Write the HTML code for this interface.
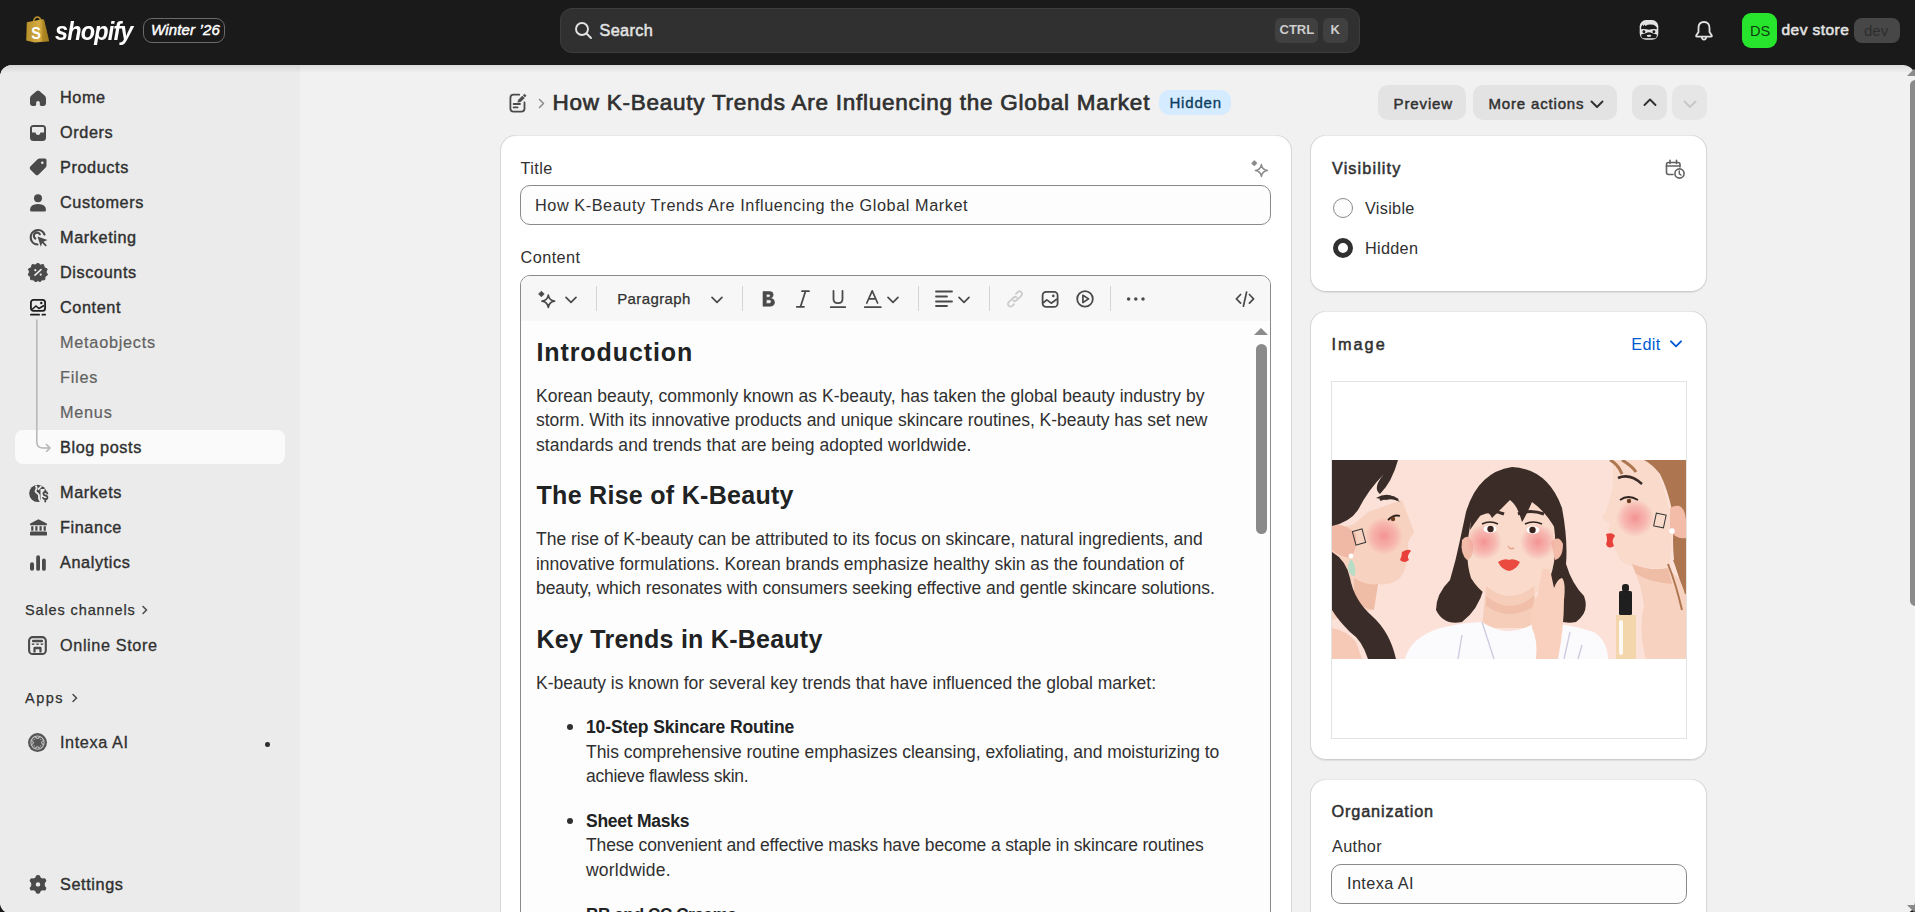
<!DOCTYPE html>
<html><head><meta charset="utf-8">
<style>
*{box-sizing:border-box;margin:0;padding:0}
html,body{width:1915px;height:912px;overflow:hidden;background:#1a1a1a;font-family:"Liberation Sans",sans-serif;color:#303030}
.abs{position:absolute}
#top{position:absolute;left:0;top:0;width:1915px;height:64px;background:#1a1a1a}
#frame{position:absolute;left:0;top:65px;width:1915px;height:849px;background:#f1f1f1;border-radius:12px;overflow:hidden}
#side{position:absolute;left:0;top:-1px;width:300px;height:860px;background:#ebebeb}
#main{position:absolute;left:0;top:0;width:1915px;height:912px;overflow:hidden;clip-path:inset(64px 0 0 0)}
.nav{position:absolute;left:60px;font-size:16.25px;font-weight:normal;-webkit-text-stroke:0.4px #303030;letter-spacing:0.6px;color:#303030;white-space:nowrap;line-height:20px}
.sub{font-weight:normal;color:#616161;-webkit-text-stroke:0.2px #616161;letter-spacing:0.75px}
.t{position:absolute;white-space:nowrap}
.card{position:absolute;background:#fff;border-radius:16px;box-shadow:0 1px 1px 0 rgba(26,26,26,.08),0 1px 0 0 rgba(208,208,208,.5) inset,1px 0 0 0 #d8d8d8 inset,-1px 0 0 0 #d8d8d8 inset,0 -1px 0 0 #cdcdcd inset;}
</style></head><body>
<div id="top">
  <!-- shopify bag -->
  <svg class="abs" style="left:26px;top:16px" width="24" height="27" viewBox="0 0 24 27">
    <defs><linearGradient id="bg1" x1="0" y1="0" x2="1" y2="0"><stop offset="0" stop-color="#b8902a"/><stop offset=".55" stop-color="#d4ac42"/><stop offset="1" stop-color="#a47c1c"/></linearGradient></defs>
    <path d="M7.5 6 Q8 1.5 11 1 Q14 0.8 14.8 4.5" fill="none" stroke="#b8902a" stroke-width="1.6"/>
    <path d="M0.8 6.2 L16.5 3.2 L18 3.8 L23.2 25.2 L8.5 26.4 L0.2 24.4 Z" fill="url(#bg1)"/>
    <path d="M16.5 3.2 L18 3.8 L23.2 25.2 L16 26 Z" fill="#9a7416" opacity=".45"/>
    <text x="5.2" y="23" font-family="Liberation Sans" font-weight="bold" font-size="17" fill="#fff" transform="scale(0.85 1)" transform-origin="5 23">S</text>
  </svg>
  <div class="t" style="left:55px;top:17.5px;font-size:26px;line-height:26px;font-weight:bold;font-style:italic;color:#fff;letter-spacing:-0.9px;transform:scaleX(0.9);transform-origin:0 0">shopify</div>
  <div class="abs" style="left:143px;top:18px;width:82px;height:25px;border:1px solid #6a6a6a;border-radius:9px"></div>
  <div class="t" style="left:151px;top:21px;font-size:15px;font-style:italic;color:#fff;font-weight:normal;-webkit-text-stroke:0.45px #fff;letter-spacing:0.15px">Winter ’26</div>

  <!-- search -->
  <div class="abs" style="left:560px;top:8px;width:800px;height:45px;background:#303030;border:1px solid #3d3d3d;border-radius:12px"></div>
  <svg class="abs" style="left:574px;top:21px" width="20" height="20" viewBox="0 0 20 20"><circle cx="8" cy="8" r="6" fill="none" stroke="#e3e3e3" stroke-width="1.9"/><path d="M12.5 12.5 L17 17" stroke="#e3e3e3" stroke-width="1.9" stroke-linecap="round"/></svg>
  <div class="t" style="left:599.5px;top:22.3px;font-size:16.25px;line-height:16.25px;font-weight:normal;-webkit-text-stroke:0.5px #e3e3e3;letter-spacing:0.35px;color:#e3e3e3">Search</div>
  <div class="abs" style="left:1275px;top:18px;width:43px;height:25px;background:#404040;border-radius:6px"></div>
  <div class="t" style="left:1279.5px;top:23.2px;font-size:13px;line-height:13px;font-weight:bold;color:#cccccc">CTRL</div>
  <div class="abs" style="left:1323px;top:18px;width:25px;height:25px;background:#404040;border-radius:6px"></div>
  <div class="t" style="left:1330.5px;top:23.2px;font-size:13px;line-height:13px;font-weight:bold;color:#cccccc">K</div>

  <svg class="abs" style="left:1638px;top:19px" width="22" height="22" viewBox="0 0 22 22"><rect x="1.7" y="1.1" width="18.6" height="19.6" rx="6.2" fill="#e3e3e3"/><path d="M3.2 7.8 L4.6 5.6 L5.4 7.2 L6.6 5.4 L7.4 7 Q9.5 5.6 12.5 5.6 Q15.8 5.6 17.2 6.8 L18.8 8.6 V10.2 Q15 9.4 11 10.8 Q7 9.4 3.2 10.2 Z" fill="#1a1a1a"/><circle cx="5.9" cy="12.8" r="1.45" fill="#1a1a1a"/><circle cx="15.9" cy="12.8" r="1.45" fill="#1a1a1a"/><path d="M3.2 15.4 Q7.5 14.6 9.5 13.6 Q11 13 12.5 13.6 Q14.5 14.6 18.8 15.4 V17 Q18.8 19.2 16.2 19.2 H5.8 Q3.2 19.2 3.2 17 Z" fill="#1a1a1a"/><ellipse cx="11" cy="16.8" rx="2.4" ry="1.1" fill="#e3e3e3"/></svg>
  <svg class="abs" style="left:1693px;top:20px" width="22" height="22" viewBox="0 0 22 22"><path d="M11 2 Q5.5 2 5.5 8 V12 L3.2 15.5 Q2.8 16.6 4 16.6 H18 Q19.2 16.6 18.8 15.5 L16.5 12 V8 Q16.5 2 11 2 Z" fill="none" stroke="#e3e3e3" stroke-width="1.8" stroke-linejoin="round"/><path d="M8.8 17 Q9 19.6 11 19.6 Q13 19.6 13.2 17" fill="none" stroke="#e3e3e3" stroke-width="1.8"/></svg>
  <div class="abs" style="left:1742px;top:13px;width:35px;height:35px;border-radius:9px;background:#27e42d"></div>
  <div class="t" style="left:1750px;top:23px;font-size:14.6px;color:#0e3d0e">DS</div>
  <div class="t" style="left:1781.5px;top:21.8px;font-size:15.5px;line-height:15.5px;font-weight:normal;-webkit-text-stroke:0.55px #e3e3e3;letter-spacing:0.45px;color:#e3e3e3">dev store</div>
  <div class="abs" style="left:1854px;top:18px;width:46px;height:25px;border-radius:8px;background:#474747"></div>
  <div class="t" style="left:1864px;top:22.5px;font-size:15px;line-height:15px;color:#2e2e2e">dev</div>
</div>

<div id="frame">
<div id="side">
  <div class="abs" style="left:15px;top:366px;width:270px;height:34px;background:#fafafa;border-radius:8px"></div>
  <!-- icons (coords relative to frame: y-64) -->
  <svg class="abs" style="left:30px;top:26px" width="16" height="16" viewBox="0 0 16 16"><path d="M6.6 0.9 Q8 -0.1 9.4 0.9 L14.6 5.6 Q16 6.8 16 8.6 V13.6 Q16 16 13.6 16 H11.2 Q9.8 16 9.8 14.6 V12.5 Q9.8 11 8 11 Q6.2 11 6.2 12.5 V14.6 Q6.2 16 4.8 16 H2.4 Q0 16 0 13.6 V8.6 Q0 6.8 1.4 5.6 Z" fill="#4a4a4a"/></svg>
  <svg class="abs" style="left:30px;top:61px" width="16" height="16" viewBox="0 0 16 16"><rect x="0" y="0" width="16" height="16" rx="3.5" fill="#4a4a4a"/><path d="M2 3 Q2 2 3 2 H13 Q14 2 14 3 V7.5 H10.5 Q10 10 8 10 Q6 10 5.5 7.5 H2 Z" fill="#ebebeb"/></svg>
  <svg class="abs" style="left:29px;top:94px" width="18" height="18" viewBox="0 0 18 18"><path d="M10.5 0.5 H16 Q17.5 0.5 17.5 2 V7.5 Q17.5 8.6 16.7 9.4 L9.4 16.7 Q8 18 6.6 16.7 L1.3 11.4 Q0 10 1.3 8.6 L8.6 1.3 Q9.4 0.5 10.5 0.5 Z" fill="#4a4a4a"/><circle cx="13.3" cy="4.7" r="1.3" fill="#ebebeb"/></svg>
  <svg class="abs" style="left:30px;top:130px" width="16" height="18" viewBox="0 0 16 18"><circle cx="8" cy="4.2" r="4" fill="#4a4a4a"/><path d="M0 16 Q0 10 8 10 Q16 10 16 16 Q16 17.6 14.4 17.6 H1.6 Q0 17.6 0 16 Z" fill="#4a4a4a"/></svg>
  <svg class="abs" style="left:29px;top:164px" width="20" height="20" viewBox="0 0 20 20"><path d="M15.5 6.5 A7.2 7.2 0 1 0 8.5 16.5" fill="none" stroke="#4a4a4a" stroke-width="2.2" stroke-linecap="round"/><path d="M10.8 6.2 A3.2 3.2 0 1 0 6.3 10.5" fill="none" stroke="#4a4a4a" stroke-width="2.2" stroke-linecap="round"/><path d="M8.5 8.5 L18.5 12 L14.5 13.8 L17.8 17.2 L16.6 18.4 L13.2 15 L11.8 18.8 Z" fill="#4a4a4a"/></svg>
  <svg class="abs" style="left:28px;top:199px" width="20" height="19" viewBox="0 0 20 19"><path d="M10 0 L12.4 2 L15.5 1.6 L16.3 4.6 L19.2 6 L18 9 L19.6 11.8 L17 13.6 L16.8 16.7 L13.7 16.9 L11.8 19 L10 17.4 L7.6 19 L5.6 16.9 L2.6 16.6 L2.3 13.6 L0 11.8 L1.6 9 L0.4 6 L3.3 4.6 L4.1 1.6 L7.2 2 Z" fill="#4a4a4a" stroke="#4a4a4a" stroke-width="1" stroke-linejoin="round"/><path d="M7 12.2 L13 6.6" stroke="#ebebeb" stroke-width="1.6" stroke-linecap="round"/><circle cx="7.3" cy="7.2" r="1.1" fill="#ebebeb"/><circle cx="12.7" cy="11.6" r="1.1" fill="#ebebeb"/></svg>
  <svg class="abs" style="left:30px;top:235px" width="16" height="17" viewBox="0 0 16 17"><rect x="0.9" y="0.9" width="14.2" height="11" rx="2.6" fill="none" stroke="#1f1f1f" stroke-width="1.8"/><path d="M2 10.5 L6 7 L9 9.5 L14 6.5" fill="none" stroke="#1f1f1f" stroke-width="1.6"/><circle cx="11.3" cy="4" r="1.2" fill="#1f1f1f"/><rect x="0" y="14.8" width="10" height="1.8" rx=".9" fill="#1f1f1f"/><rect x="11.5" y="14.8" width="4.5" height="1.8" rx=".9" fill="#1f1f1f"/></svg>
  <path/>
  <svg class="abs" style="left:34px;top:252px" width="20" height="136" viewBox="0 0 20 136"><path d="M2.8 3.5 V126 Q2.8 132 9 132 H16" fill="none" stroke="#b5b5b5" stroke-width="1.5"/><path d="M12.5 128.5 L16 132 L12.5 135.5" fill="none" stroke="#b5b5b5" stroke-width="1.5" stroke-linecap="round" stroke-linejoin="round"/></svg>
  <svg class="abs" style="left:28.5px;top:419.5px" width="20" height="20" viewBox="0 0 20 20"><defs><mask id="mk"><rect width="20" height="20" fill="#fff"/><path d="M6.5 1.8 Q8.5 3.5 7.2 5.5 Q5.5 7.5 8 9 Q10.5 10.5 10 13 Q9.5 15.5 12 17.5" fill="none" stroke="#000" stroke-width="1.8"/><path d="M12 2.5 L9.5 5.2" stroke="#000" stroke-width="1.8" stroke-linecap="round"/><rect x="11.5" y="5" width="9" height="15" fill="#000"/></mask></defs><circle cx="8.8" cy="9.3" r="8.6" fill="#4a4a4a" mask="url(#mk)"/><path d="M18.4 9.4 Q18 8 16.3 8 Q14.4 8 14.4 9.7 Q14.4 11.2 16.3 11.5 Q18.4 11.8 18.4 13.5 Q18.4 15.2 16.3 15.2 Q14.4 15.2 14 13.8" fill="none" stroke="#4a4a4a" stroke-width="1.8" stroke-linecap="round"/><path d="M16.3 6.2 V8 M16.3 15.2 V17.6" stroke="#4a4a4a" stroke-width="1.8" stroke-linecap="round"/></svg>
  <svg class="abs" style="left:30px;top:455px" width="17" height="17" viewBox="0 0 17 17"><path d="M8.5 0.2 L16.3 4.3 Q17 4.8 17 5.5 V6.2 H0 V5.5 Q0 4.8 0.7 4.3 Z" fill="#4a4a4a"/><rect x="1.2" y="7.2" width="2.2" height="4.5" fill="#4a4a4a"/><rect x="5.3" y="7.2" width="2.2" height="4.5" fill="#4a4a4a"/><rect x="9.5" y="7.2" width="2.2" height="4.5" fill="#4a4a4a"/><rect x="13.6" y="7.2" width="2.2" height="4.5" fill="#4a4a4a"/><rect x="0" y="12.6" width="17" height="4" rx="1.2" fill="#4a4a4a"/></svg>
  <svg class="abs" style="left:30px;top:491px" width="16" height="16" viewBox="0 0 16 16"><rect x="0" y="7.2" width="4" height="8.6" rx="2" fill="#4a4a4a"/><rect x="6.2" y="0.2" width="3.8" height="15.6" rx="1.9" fill="#4a4a4a"/><rect x="12" y="3.5" width="3.8" height="12.3" rx="1.9" fill="#4a4a4a"/></svg>
  <svg class="abs" style="left:28px;top:571.5px" width="20" height="20" viewBox="0 0 20 20"><rect x="1.1" y="1.1" width="16.7" height="16.9" rx="3.6" fill="none" stroke="#4a4a4a" stroke-width="2.1"/><rect x="4" y="3.7" width="11" height="2.6" rx="1" fill="#4a4a4a"/><path d="M3.6 7.6 A1.5 1.5 0 0 0 6.6 7.6 Z M8 7.6 A1.5 1.5 0 0 0 11 7.6 Z M12.4 7.6 A1.5 1.5 0 0 0 15.4 7.6 Z" fill="#4a4a4a"/><path d="M5.4 16.4 V12.2 Q5.4 10.8 6.9 10.8 H12.1 Q13.6 10.8 13.6 12.2 V16.4 H11.4 V13.2 H7.6 V16.4 Z" fill="#4a4a4a"/></svg>
  <svg class="abs" style="left:28px;top:668.5px" width="20" height="20" viewBox="0 0 20 20"><circle cx="9.5" cy="9.6" r="9.5" fill="#565656"/><circle cx="9.5" cy="9.6" r="6.6" fill="none" stroke="#c4c4c4" stroke-width="1.1"/><path d="M7 3.4 Q9.5 7.6 12 3.4 M7 15.8 Q9.5 11.6 12 15.8 M3.3 7.1 Q7.5 9.6 3.3 12.1 M15.7 7.1 Q11.5 9.6 15.7 12.1" fill="none" stroke="#c4c4c4" stroke-width="1.1"/><rect x="6.3" y="6.4" width="6.4" height="6.4" rx="1" fill="#565656"/><circle cx="6.2" cy="6.3" r=".6" fill="#c4c4c4"/><circle cx="12.8" cy="6.3" r=".6" fill="#c4c4c4"/><circle cx="6.2" cy="12.9" r=".6" fill="#c4c4c4"/><circle cx="12.8" cy="12.9" r=".6" fill="#c4c4c4"/></svg>
  <div class="abs" style="left:265px;top:678px;width:4.5px;height:4.5px;border-radius:50%;background:#303030"></div>
  <svg class="abs" style="left:29px;top:811px" width="18" height="19" viewBox="0 0 18 19"><path d="M7 0.8 Q7.5 0 9 0 Q10.5 0 11 0.8 L11.6 2.6 L13.4 3.6 L15.3 3.2 Q16.2 3.2 16.9 4.4 Q17.6 5.6 17.1 6.4 L15.8 7.9 V10.9 L17.1 12.4 Q17.6 13.2 16.9 14.4 Q16.2 15.6 15.3 15.6 L13.4 15.2 L11.6 16.2 L11 18 Q10.5 18.8 9 18.8 Q7.5 18.8 7 18 L6.4 16.2 L4.6 15.2 L2.7 15.6 Q1.8 15.6 1.1 14.4 Q0.4 13.2 0.9 12.4 L2.2 10.9 V7.9 L0.9 6.4 Q0.4 5.6 1.1 4.4 Q1.8 3.2 2.7 3.2 L4.6 3.6 L6.4 2.6 Z" fill="#4a4a4a"/><circle cx="9" cy="9.4" r="2.2" fill="#ebebeb"/></svg>

  <div class="nav" style="top:23px">Home</div>
  <div class="nav" style="top:58px">Orders</div>
  <div class="nav" style="top:93px">Products</div>
  <div class="nav" style="top:128px">Customers</div>
  <div class="nav" style="top:163px">Marketing</div>
  <div class="nav" style="top:198px">Discounts</div>
  <div class="nav" style="top:233px">Content</div>
  <div class="nav sub" style="top:268px">Metaobjects</div>
  <div class="nav sub" style="top:303px">Files</div>
  <div class="nav sub" style="top:338px">Menus</div>
  <div class="nav" style="top:373px">Blog posts</div>
  <div class="nav" style="top:418px">Markets</div>
  <div class="nav" style="top:453px">Finance</div>
  <div class="nav" style="top:488px">Analytics</div>
  <div class="nav" style="left:25px;top:536px;font-size:14.5px;letter-spacing:0.88px;-webkit-text-stroke:0.25px #303030">Sales channels</div>
  <svg class="abs" style="left:141px;top:541px" width="8" height="10" viewBox="0 0 8 10"><path d="M2 1.5 L5.5 5 L2 8.5" fill="none" stroke="#4a4a4a" stroke-width="1.5" stroke-linecap="round"/></svg>
  <div class="nav" style="top:571px;-webkit-text-stroke:0.3px #303030">Online Store</div>
  <div class="nav" style="left:25px;top:624px;font-size:14.5px;letter-spacing:1.5px;-webkit-text-stroke:0.25px #303030">Apps</div>
  <svg class="abs" style="left:70.5px;top:629px" width="8" height="10" viewBox="0 0 8 10"><path d="M2 1.5 L5.5 5 L2 8.5" fill="none" stroke="#4a4a4a" stroke-width="1.5" stroke-linecap="round"/></svg>
  <div class="nav" style="top:668px;-webkit-text-stroke:0.3px #303030">Intexa AI</div>
  <div class="nav" style="top:810px">Settings</div>
</div>

<div class="abs" style="left:0;top:0;width:1915px;height:8px;background:linear-gradient(rgba(0,0,0,.09),rgba(0,0,0,0))"></div>
</div>
<div id="main">
<svg class="abs" style="left:508px;top:92px" width="20" height="22" viewBox="0 0 20 22"><path d="M11.2 2.7 H5.6 Q2.4 2.7 2.4 5.9 V16.4 Q2.4 19.6 5.6 19.6 H13.3 Q16.5 19.6 16.5 16.4 V10.4" fill="none" stroke="#4a4a4a" stroke-width="1.8" stroke-linecap="round"/><path d="M9.8 10.2 L10.6 7.8 L14.4 4 L16.4 6 L12.6 9.8 Z" fill="#4a4a4a" stroke="#4a4a4a" stroke-width=".6" stroke-linejoin="round"/><path d="M15.2 3.2 L16.4 2 L18.2 3.8 L17 5 Z" fill="#4a4a4a" stroke="#4a4a4a" stroke-width=".5" stroke-linejoin="round"/><path d="M5.6 12 H12 M5.6 15.4 H9.6" stroke="#4a4a4a" stroke-width="1.8" stroke-linecap="round"/></svg><svg class="abs" style="left:537px;top:98px" width="9" height="11" viewBox="0 0 9 11"><path d="M2.5 1.5 L6.5 5.5 L2.5 9.5" fill="none" stroke="#8a8a8a" stroke-width="1.5" stroke-linecap="round" stroke-linejoin="round"/></svg><div class="t" style="left:552.5px;top:91.95px;font-size:22.5px;line-height:22.5px;color:#303030;font-weight:normal;letter-spacing:0.752px;-webkit-text-stroke:0.7px #303030;">How K-Beauty Trends Are Influencing the Global Market</div>
<div class="abs" style="left:1159px;top:90px;width:72px;height:25px;border-radius:10px;background:#d5ebff"></div><div class="t" style="left:1169.5px;top:95.10px;font-size:15px;line-height:15px;color:#0b3f5f;font-weight:normal;letter-spacing:0.791px;-webkit-text-stroke:0.35px #0b3f5f;">Hidden</div>
<div class="abs" style="left:1378px;top:85px;width:88px;height:35px;border-radius:10px;background:#e3e3e3"></div><div class="t" style="left:1393.5px;top:95.60px;font-size:15px;line-height:15px;color:#303030;font-weight:normal;letter-spacing:0.890px;-webkit-text-stroke:0.46px #303030;">Preview</div>
<div class="abs" style="left:1473px;top:85px;width:144px;height:35px;border-radius:10px;background:#e3e3e3"></div><div class="t" style="left:1488.5px;top:95.60px;font-size:15px;line-height:15px;color:#303030;font-weight:normal;letter-spacing:0.830px;-webkit-text-stroke:0.46px #303030;">More actions</div>
<svg class="abs" style="left:1589px;top:98px" width="16" height="12" viewBox="0 0 16 12"><path d="M2.5 3.5 L8 9 L13.5 3.5" fill="none" stroke="#303030" stroke-width="1.9" stroke-linecap="round" stroke-linejoin="round"/></svg><div class="abs" style="left:1632px;top:85px;width:35px;height:35px;border-radius:10px;background:#e3e3e3"></div><svg class="abs" style="left:1642px;top:96px" width="16" height="12" viewBox="0 0 16 12"><path d="M2.5 9 L8 3.5 L13.5 9" fill="none" stroke="#303030" stroke-width="1.9" stroke-linecap="round" stroke-linejoin="round"/></svg><div class="abs" style="left:1672px;top:85px;width:35px;height:35px;border-radius:10px;background:#e6e6e6"></div><svg class="abs" style="left:1682px;top:98px" width="16" height="12" viewBox="0 0 16 12"><path d="M2.5 3.5 L8 9 L13.5 3.5" fill="none" stroke="#c7c7c7" stroke-width="1.9" stroke-linecap="round" stroke-linejoin="round"/></svg><div class="card" style="left:499.5px;top:134.5px;width:792px;height:800px"></div><div class="t" style="left:520.6px;top:159.54px;font-size:16.25px;line-height:16.25px;color:#303030;font-weight:normal;letter-spacing:0.4px">Title</div>
<svg class="abs" style="left:1248px;top:158px" width="22" height="22" viewBox="0 0 22 22"><path d="M6.3 2.5 L9 5.2 L6.3 7.9 L3.6 5.2 Z" fill="#8a8a8a" stroke="#8a8a8a" stroke-width=".8" stroke-linejoin="round"/><path d="M13.4 6.6 Q14.2 11.7 19.4 12.5 Q14.2 13.3 13.4 18.4 Q12.6 13.3 7.4 12.5 Q12.6 11.7 13.4 6.6 Z" fill="none" stroke="#8a8a8a" stroke-width="1.5" stroke-linejoin="round"/></svg><div class="abs" style="left:520px;top:185px;width:751px;height:40px;border-radius:10px;border:1px solid #8a8a8a;background:#fdfdfd"></div><div class="t" style="left:535px;top:197.24px;font-size:16.25px;line-height:16.25px;color:#303030;font-weight:normal;letter-spacing:0.572px;">How K-Beauty Trends Are Influencing the Global Market</div>
<div class="t" style="left:520.5px;top:249.24px;font-size:16.25px;line-height:16.25px;color:#303030;font-weight:normal;letter-spacing:0.45px">Content</div>
<div class="abs" style="left:520px;top:275px;width:751px;height:700px;border-radius:10px;border:1px solid #8a8a8a;background:#fdfdfd;overflow:hidden"><div style="height:45px;background:#f7f7f7"></div></div><svg class="abs" style="left:536px;top:289px" width="22" height="22" viewBox="0 0 22 22"><path d="M5.4 2.2 L8.2 5 L5.4 7.8 L2.6 5 Z" fill="#4a4a4a" stroke="#4a4a4a" stroke-width=".8" stroke-linejoin="round"/><path d="M12.3 6 Q13.1 11.4 18.6 12.2 Q13.1 13 12.3 18.5 Q11.5 13 6 12.2 Q11.5 11.4 12.3 6 Z" fill="none" stroke="#4a4a4a" stroke-width="1.7" stroke-linejoin="round"/></svg><svg class="abs" style="left:564px;top:294.5px" width="14" height="10" viewBox="0 0 14 10"><path d="M2 2.3 L7 7.3 L12 2.3" fill="none" stroke="#4a4a4a" stroke-width="1.7" stroke-linecap="round" stroke-linejoin="round"/></svg><div class="abs" style="left:596px;top:286px;width:1px;height:25px;background:#d4d4d4"></div><div class="t" style="left:617.2px;top:291.10px;font-size:15px;line-height:15px;color:#303030;font-weight:normal;letter-spacing:0.4px;-webkit-text-stroke:0.25px #303030">Paragraph</div>
<svg class="abs" style="left:710px;top:294.5px" width="14" height="10" viewBox="0 0 14 10"><path d="M2 2.3 L7 7.3 L12 2.3" fill="none" stroke="#4a4a4a" stroke-width="1.7" stroke-linecap="round" stroke-linejoin="round"/></svg><div class="abs" style="left:742px;top:286px;width:1px;height:25px;background:#d4d4d4"></div><svg class="abs" style="left:760px;top:289px" width="18" height="20" viewBox="0 0 18 20"><path d="M3 2.5 H9.5 Q13.2 2.5 13.2 5.8 Q13.2 8.5 10.5 9.2 Q14.5 9.8 14.5 13.2 Q14.5 17.2 10 17.2 H3 Z M6.3 5.3 V8.2 H9.2 Q10.2 8.2 10.2 6.75 Q10.2 5.3 9.2 5.3 Z M6.3 10.8 V14.4 H9.6 Q11.2 14.4 11.2 12.6 Q11.2 10.8 9.6 10.8 Z" fill="#4a4a4a" fill-rule="evenodd" stroke="#4a4a4a" stroke-width=".6" stroke-linejoin="round"/></svg><svg class="abs" style="left:795px;top:289px" width="16" height="20" viewBox="0 0 16 20"><path d="M7 2.2 H14 M1.8 17.8 H9 M10.5 2.2 L5.5 17.8" fill="none" stroke="#4a4a4a" stroke-width="1.8" stroke-linecap="round"/></svg><svg class="abs" style="left:829px;top:289px" width="18" height="20" viewBox="0 0 18 20"><path d="M4.5 1.8 V10 Q4.5 14.2 9 14.2 Q13.5 14.2 13.5 10 V1.8" fill="none" stroke="#4a4a4a" stroke-width="1.8" stroke-linecap="round"/><path d="M1.8 18.2 H16.2" stroke="#4a4a4a" stroke-width="1.8" stroke-linecap="round"/></svg><svg class="abs" style="left:863px;top:289px" width="20" height="20" viewBox="0 0 20 20"><path d="M3.8 14 L9.2 1.8 L14.6 14 M5.6 9.8 H12.8" fill="none" stroke="#4a4a4a" stroke-width="1.7" stroke-linecap="round" stroke-linejoin="round"/><path d="M1.8 18.2 H17.8" stroke="#4a4a4a" stroke-width="1.8" stroke-linecap="round"/></svg><svg class="abs" style="left:886px;top:294.5px" width="14" height="10" viewBox="0 0 14 10"><path d="M2 2.3 L7 7.3 L12 2.3" fill="none" stroke="#4a4a4a" stroke-width="1.7" stroke-linecap="round" stroke-linejoin="round"/></svg><div class="abs" style="left:918px;top:286px;width:1px;height:25px;background:#d4d4d4"></div><svg class="abs" style="left:934px;top:289px" width="20" height="20" viewBox="0 0 20 20"><path d="M2 2.5 H18 M2 7.5 H13 M2 12.5 H18 M2 17 H13" stroke="#4a4a4a" stroke-width="1.8" stroke-linecap="round"/></svg><svg class="abs" style="left:957px;top:294.5px" width="14" height="10" viewBox="0 0 14 10"><path d="M2 2.3 L7 7.3 L12 2.3" fill="none" stroke="#4a4a4a" stroke-width="1.7" stroke-linecap="round" stroke-linejoin="round"/></svg><div class="abs" style="left:989px;top:286px;width:1px;height:25px;background:#d4d4d4"></div><svg class="abs" style="left:1005px;top:289px" width="20" height="20" viewBox="0 0 20 20"><path d="M8.5 11.5 Q10 13 11.8 11.2 L16.2 6.8 Q18 5 16.2 3.2 Q14.4 1.4 12.6 3.2 L11 4.8 M11.5 8.5 Q10 7 8.2 8.8 L3.8 13.2 Q2 15 3.8 16.8 Q5.6 18.6 7.4 16.8 L9 15.2" fill="none" stroke="#cccccc" stroke-width="1.8" stroke-linecap="round"/></svg><svg class="abs" style="left:1040px;top:289px" width="20" height="20" viewBox="0 0 20 20"><rect x="2.6" y="2.9" width="15" height="15" rx="3.5" fill="none" stroke="#4a4a4a" stroke-width="1.8"/><path d="M3 14 L6.8 10.8 L11.2 14.2 L17 10" fill="none" stroke="#4a4a4a" stroke-width="1.7" stroke-linejoin="round"/><circle cx="13.3" cy="6.9" r="1.3" fill="#4a4a4a"/></svg><svg class="abs" style="left:1075px;top:289px" width="20" height="20" viewBox="0 0 20 20"><circle cx="10" cy="9.9" r="7.8" fill="none" stroke="#4a4a4a" stroke-width="1.8"/><path d="M7.9 6.3 L13.6 9.9 L7.9 13.5 Z" fill="none" stroke="#4a4a4a" stroke-width="1.7" stroke-linejoin="round"/></svg><div class="abs" style="left:1110px;top:286px;width:1px;height:25px;background:#d4d4d4"></div><svg class="abs" style="left:1126px;top:289px" width="20" height="20" viewBox="0 0 20 20"><circle cx="2.6" cy="10" r="1.75" fill="#4a4a4a"/><circle cx="9.8" cy="10" r="1.75" fill="#4a4a4a"/><circle cx="17" cy="10" r="1.75" fill="#4a4a4a"/></svg><svg class="abs" style="left:1235px;top:289px" width="20" height="20" viewBox="0 0 20 20"><path d="M5.6 5.5 L1.4 9.8 L5.6 14.1 M14.4 5.5 L18.6 9.8 L14.4 14.1 M11.6 3 L8.4 17.2" fill="none" stroke="#4a4a4a" stroke-width="1.7" stroke-linecap="round" stroke-linejoin="round"/></svg><div class="abs" style="left:1254px;top:328px;width:0;height:0;border-left:7px solid transparent;border-right:7px solid transparent;border-bottom:7px solid #8a8a8a"></div><div class="abs" style="left:1256px;top:344px;width:11px;height:190px;border-radius:6px;background:#8a8a8a"></div><div class="t" style="left:536.5px;top:340.00px;font-size:25px;line-height:25px;color:#202223;font-weight:bold;letter-spacing:0.899px;">Introduction</div>
<div class="t" style="left:536px;top:388.00px;font-size:17.5px;line-height:17.5px;color:#303030;font-weight:normal;letter-spacing:0.009px;">Korean beauty, commonly known as K-beauty, has taken the global beauty industry by</div>
<div class="t" style="left:536px;top:412.00px;font-size:17.5px;line-height:17.5px;color:#303030;font-weight:normal;letter-spacing:-0.019px;">storm. With its innovative products and unique skincare routines, K-beauty has set new</div>
<div class="t" style="left:536px;top:437.00px;font-size:17.5px;line-height:17.5px;color:#303030;font-weight:normal;letter-spacing:0.063px;">standards and trends that are being adopted worldwide.</div>
<div class="t" style="left:536.5px;top:483.00px;font-size:25px;line-height:25px;color:#202223;font-weight:bold;letter-spacing:0.293px;">The Rise of K-Beauty</div>
<div class="t" style="left:536px;top:531.00px;font-size:17.5px;line-height:17.5px;color:#303030;font-weight:normal;letter-spacing:-0.018px;">The rise of K-beauty can be attributed to its focus on skincare, natural ingredients, and</div>
<div class="t" style="left:536px;top:556.00px;font-size:17.5px;line-height:17.5px;color:#303030;font-weight:normal;letter-spacing:-0.013px;">innovative formulations. Korean brands emphasize healthy skin as the foundation of</div>
<div class="t" style="left:536px;top:580.00px;font-size:17.5px;line-height:17.5px;color:#303030;font-weight:normal;letter-spacing:-0.063px;">beauty, which resonates with consumers seeking effective and gentle skincare solutions.</div>
<div class="t" style="left:536.5px;top:627.00px;font-size:25px;line-height:25px;color:#202223;font-weight:bold;letter-spacing:0.246px;">Key Trends in K-Beauty</div>
<div class="t" style="left:536px;top:675.00px;font-size:17.5px;line-height:17.5px;color:#303030;font-weight:normal;letter-spacing:-0.007px;">K-beauty is known for several key trends that have influenced the global market:</div>
<div class="abs" style="left:567px;top:724px;width:6px;height:6px;border-radius:50%;background:#303030"></div><div class="t" style="left:586px;top:719.00px;font-size:17.5px;line-height:17.5px;color:#202223;font-weight:bold;letter-spacing:-0.119px;">10-Step Skincare Routine</div>
<div class="t" style="left:586px;top:744.00px;font-size:17.5px;line-height:17.5px;color:#303030;font-weight:normal;letter-spacing:-0.048px;">This comprehensive routine emphasizes cleansing, exfoliating, and moisturizing to</div>
<div class="t" style="left:586px;top:768.00px;font-size:17.5px;line-height:17.5px;color:#303030;font-weight:normal;letter-spacing:-0.271px;">achieve flawless skin.</div>
<div class="abs" style="left:567px;top:818px;width:6px;height:6px;border-radius:50%;background:#303030"></div><div class="t" style="left:586px;top:813.00px;font-size:17.5px;line-height:17.5px;color:#202223;font-weight:bold;letter-spacing:-0.263px;">Sheet Masks</div>
<div class="t" style="left:586px;top:837.00px;font-size:17.5px;line-height:17.5px;color:#303030;font-weight:normal;letter-spacing:-0.148px;">These convenient and effective masks have become a staple in skincare routines</div>
<div class="t" style="left:586px;top:862.00px;font-size:17.5px;line-height:17.5px;color:#303030;font-weight:normal;letter-spacing:0.212px;">worldwide.</div>
<div class="abs" style="left:567px;top:912.5px;width:6px;height:6px;border-radius:50%;background:#303030"></div><div class="t" style="left:586px;top:907.00px;font-size:17.5px;line-height:17.5px;color:#202223;font-weight:bold;letter-spacing:-0.625px;">BB and CC Creams</div>
<div class="card" style="left:1310px;top:134.5px;width:397px;height:157px"></div><div class="t" style="left:1332px;top:159.54px;font-size:16.25px;line-height:16.25px;color:#303030;font-weight:normal;letter-spacing:1.099px;-webkit-text-stroke:0.5px #303030;">Visibility</div>
<svg class="abs" style="left:1664px;top:158px" width="22" height="22" viewBox="0 0 22 22"><path d="M9 16.5 H4.5 Q2.5 16.5 2.5 14.5 V6.5 Q2.5 4.5 4.5 4.5 H14 Q16 4.5 16 6.5 V9" fill="none" stroke="#616161" stroke-width="1.6" stroke-linecap="round"/><path d="M6 2.2 V5.5 M12.5 2.2 V5.5 M2.5 8 H15.5" stroke="#616161" stroke-width="1.6" stroke-linecap="round"/><circle cx="15.5" cy="15.5" r="4.6" fill="#fff" stroke="#616161" stroke-width="1.6"/><path d="M15.3 13 V15.8 L17 17" fill="none" stroke="#616161" stroke-width="1.4" stroke-linecap="round"/></svg><div class="abs" style="left:1333px;top:198px;width:20px;height:20px;border-radius:50%;border:1px solid #8a8a8a;background:#fdfdfd"></div><div class="t" style="left:1365px;top:200.04px;font-size:16.25px;line-height:16.25px;color:#303030;font-weight:normal;letter-spacing:0.3px">Visible</div>
<div class="abs" style="left:1333px;top:238px;width:20px;height:20px;border-radius:50%;border:5.5px solid #303030;background:#fff"></div><div class="t" style="left:1365px;top:240.24px;font-size:16.25px;line-height:16.25px;color:#303030;font-weight:normal;letter-spacing:0.3px">Hidden</div>
<div class="card" style="left:1310px;top:310.5px;width:397px;height:449px"></div><div class="t" style="left:1331.5px;top:336.04px;font-size:16.25px;line-height:16.25px;color:#303030;font-weight:normal;letter-spacing:2.007px;-webkit-text-stroke:0.5px #303030;">Image</div>
<div class="t" style="left:1631.3px;top:335.84px;font-size:16.25px;line-height:16.25px;color:#005bd3;font-weight:normal;letter-spacing:0.3px">Edit</div>
<svg class="abs" style="left:1668.5px;top:338.5px" width="14" height="10" viewBox="0 0 14 10"><path d="M2 2.3 L7 7.3 L12 2.3" fill="none" stroke="#005bd3" stroke-width="1.9" stroke-linecap="round" stroke-linejoin="round"/></svg><div class="abs" style="left:1331px;top:381px;width:356px;height:358px;border:1px solid #e3e3e3;background:#fff"></div><div id="illus" class="abs" style="left:1332px;top:460px;width:354px;height:199px;background:#fbdcd2;overflow:hidden"><svg width="354" height="199" viewBox="0 0 354 199" style="position:absolute;left:0;top:0">
<defs>
<radialGradient id="blush"><stop offset="0" stop-color="#f38f90" stop-opacity=".95"/><stop offset=".6" stop-color="#f59a9a" stop-opacity=".55"/><stop offset="1" stop-color="#f59a9a" stop-opacity="0"/></radialGradient>
</defs>
<rect width="354" height="199" fill="#fbe1d8"/>
<!-- LEFT WOMAN -->
<path d="M0 60 Q10 70 22 64 L36 52 L70 40 L82 72 L76 82 L76 96 Q74 110 68 118 Q58 126 46 124 L40 150 L0 160 Z" fill="#f8d2c0"/>
<path d="M0 66 Q12 62 24 74 Q26 90 18 98 Q6 96 0 90 Z" fill="#f0b9a5"/>
<path d="M22 118 Q34 126 46 124 L42 150 Q30 148 22 140 Z" fill="#efbca6"/>
<path d="M0 0 H66 Q60 22 48 34 Q40 28 52 14 Q36 30 26 50 Q18 62 0 66 Z" fill="#3a2c28"/>
<path d="M44 38 Q58 30 68 42 Q62 38 54 40 Z" fill="#3a2c28"/>
<path d="M0 92 Q14 100 18 118 Q22 140 40 156 Q58 172 64 199 H36 Q30 180 18 172 Q6 160 0 150 Z" fill="#3a2c28"/>
<path d="M0 168 Q14 170 24 182 L30 199 H0 Z" fill="#f6c9b6"/>
<circle cx="52" cy="76" r="19" fill="url(#blush)"/>
<path d="M70 92 Q77 88 79 91 Q74 96 77 100 Q72 104 68 100 Q70 96 70 92 Z" fill="#e8413a"/>
<path d="M56 60 Q62 54 68 56" stroke="#2f2420" stroke-width="1.8" fill="none"/>
<circle cx="61" cy="59" r="2.2" fill="#6b3b1e"/>
<path d="M48 40 Q58 34 66 40" stroke="#3a2c28" stroke-width="2.4" fill="none"/>
<rect x="22" y="70" width="10" height="14" fill="none" stroke="#333" stroke-width="1" transform="rotate(-15 27 77)"/>
<circle cx="19" cy="96" r="2.4" fill="#fff"/>
<path d="M19 99 Q25 106 23 116 Q17 116 16 108 Q16 102 19 99 Z" fill="#b9dcc6"/>
<!-- MIDDLE WOMAN -->
<path d="M134 52 Q146 12 180 7 Q216 9 230 48 Q236 80 234 104 Q240 124 252 136 Q258 152 244 162 Q226 166 214 150 L206 128 L152 128 Q146 150 130 162 Q112 166 104 150 Q104 134 118 120 Q124 100 128 80 Z" fill="#3b2c27"/>
<path d="M138 66 Q142 42 164 38 Q180 35 198 37 Q220 42 222 66 Q226 96 218 118 Q204 140 178 142 Q152 140 139 118 Q132 96 138 66 Z" fill="#f9dacb"/>
<path d="M140 44 Q160 24 184 24 Q210 26 222 44 Q226 58 224 70 Q214 52 200 42 Q194 56 190 62 Q186 46 178 40 Q168 50 160 58 Q156 48 148 56 Q142 64 138 70 Z" fill="#3b2c27"/>
<path d="M130 80 Q137 72 141 84 Q142 98 135 100 Q128 94 130 80 Z" fill="#f2bca8"/>
<path d="M219 82 Q227 74 231 84 Q231 98 223 100 Z" fill="#f2bca8"/>
<path d="M154 126 Q178 146 202 126 L206 168 H150 Z" fill="#f6cdb9"/>
<path d="M154 136 Q178 156 202 136 L202 146 Q178 162 154 146 Z" fill="#eeb8a2" opacity=".7"/>
<circle cx="152" cy="82" r="18" fill="url(#blush)"/>
<circle cx="206" cy="82" r="18" fill="url(#blush)"/>
<ellipse cx="158" cy="69" rx="6.5" ry="3.8" fill="#fff"/><circle cx="158.5" cy="69" r="3.2" fill="#3a2420"/>
<ellipse cx="201" cy="70" rx="6.5" ry="3.8" fill="#fff"/><circle cx="200.5" cy="70" r="3.2" fill="#3a2420"/>
<path d="M150 64 Q158 60 166 64 M193 64 Q201 60 210 64" stroke="#2f2420" stroke-width="1.5" fill="none"/>
<path d="M148 54 Q160 49 172 54" stroke="#3b2c27" stroke-width="3" fill="none"/>
<path d="M186 54 Q198 49 212 54" stroke="#3b2c27" stroke-width="3" fill="none"/>
<path d="M176 86 Q178 90 182 88" stroke="#e5a58e" stroke-width="1.4" fill="none"/>
<path d="M166 102 Q172 98 177 100 Q182 98 188 102 Q184 110 177 111 Q170 110 166 102 Z" fill="#ea4a40"/>
<path d="M73 199 Q78 178 108 168 Q134 162 150 162 Q177 180 204 162 Q238 164 262 172 Q276 182 276 199 Z" fill="#fbfbfd"/>
<path d="M130 175 L126 199 M150 162 L162 199 M238 172 L232 199 M250 185 L246 199" stroke="#cfcbe0" stroke-width="1.4" fill="none"/>
<path d="M210 110 Q216 106 219 114 L222 128 Q226 118 230 118 Q234 122 232 140 Q232 168 226 199 H204 Q206 180 200 168 Q196 150 206 134 Z" fill="#f8d0bd"/>
<!-- BOTTLE -->
<rect x="290" y="124" width="7" height="8" rx="3" fill="#1f1f1f"/>
<rect x="287" y="131" width="13" height="24" rx="1.5" fill="#1f1f1f"/>
<rect x="284" y="155" width="20" height="44" fill="#f4d6ac"/>
<rect x="287" y="160" width="4" height="35" rx="2" fill="#fff" opacity=".85"/>
<!-- RIGHT WOMAN -->
<path d="M280 0 H320 Q334 28 338 56 Q342 90 336 110 Q320 108 300 106 Q290 104 286 96 L282 86 Q278 82 280 76 Q274 70 278 64 L270 58 Q276 48 280 32 Q282 14 280 0 Z" fill="#f9dacb"/>
<path d="M300 104 Q322 112 336 108 L354 126 V199 H314 Q306 170 312 146 Q310 126 300 104 Z" fill="#f8d2c0"/>
<path d="M300 104 Q320 112 336 108 L340 124 Q318 122 304 114 Z" fill="#efbca6"/>
<path d="M312 0 H354 V134 Q346 118 342 100 Q340 80 342 62 Q338 34 328 14 Q320 4 312 0 Z" fill="#ad7650"/><path d="M342 100 Q350 120 354 134 M336 104 Q344 124 350 150" stroke="#ad7650" stroke-width="2" fill="none"/>
<path d="M278 0 Q286 4 290 14 M290 0 Q300 6 304 12" stroke="#ad7650" stroke-width="3" fill="none"/>
<path d="M338 48 Q352 40 354 60 V78 Q344 80 338 70 Z" fill="#f2bca8"/>
<circle cx="303" cy="58" r="19" fill="url(#blush)"/>
<path d="M274 74 Q281 72 283 76 Q279 80 282 86 Q276 90 274 84 Q276 80 274 74 Z" fill="#e8413a"/>
<path d="M288 40 Q296 34 306 40" stroke="#2f2420" stroke-width="1.8" fill="none"/>
<circle cx="297" cy="41" r="2.2" fill="#6b3b1e"/>
<path d="M286 18 Q298 13 310 24" stroke="#3b2c27" stroke-width="2.6" fill="none"/>
<rect x="323" y="54" width="10" height="13" fill="none" stroke="#333" stroke-width="1" transform="rotate(12 328 60)"/>
<circle cx="340" cy="71" r="2.8" fill="#fff"/>
</svg>
</div><div class="card" style="left:1310px;top:778.5px;width:397px;height:300px"></div><div class="t" style="left:1331.5px;top:803.44px;font-size:16.25px;line-height:16.25px;color:#303030;font-weight:normal;letter-spacing:0.860px;-webkit-text-stroke:0.5px #303030;">Organization</div>
<div class="t" style="left:1332px;top:838.34px;font-size:16.25px;line-height:16.25px;color:#303030;font-weight:normal;letter-spacing:0.35px">Author</div>
<div class="abs" style="left:1331px;top:864px;width:356px;height:40px;border-radius:10px;border:1px solid #8a8a8a;background:#fdfdfd"></div><div class="t" style="left:1347px;top:875.24px;font-size:16.25px;line-height:16.25px;color:#303030;font-weight:normal;letter-spacing:0.4px">Intexa AI</div>
<div class="abs" style="left:1907px;top:69px;width:0;height:0;border-left:7px solid transparent;border-right:7px solid transparent;border-bottom:7px solid #8a8a8a"></div><div class="abs" style="left:1909.5px;top:80px;width:11px;height:526px;border-radius:5.5px;background:#8a8a8a"></div><div class="abs" style="left:1907px;top:905px;width:0;height:0;border-left:7px solid transparent;border-right:7px solid transparent;border-top:7px solid #8a8a8a"></div>
</div>
</body></html>
